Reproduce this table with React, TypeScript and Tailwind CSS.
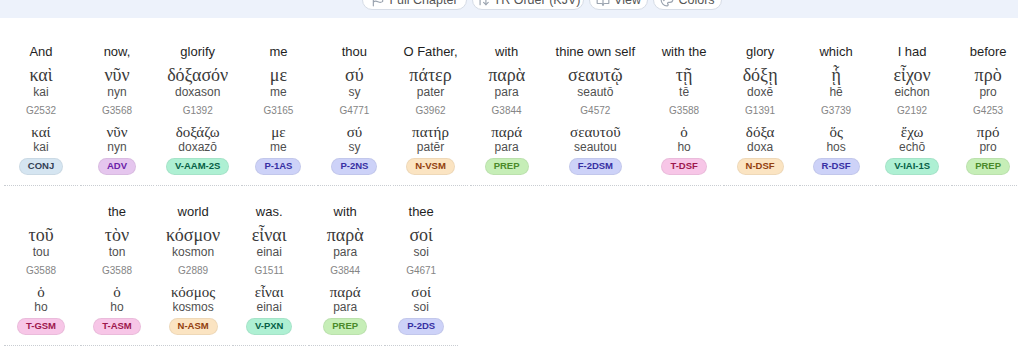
import React from "react";
import { Flag, ArrowUpDown, BookOpen, Palette } from "lucide-react";

type Word = {
  en: string;
  gr: string;
  tr: string;
  strong: string;
  lemma: string;
  lemmaTr: string;
  morph: string;
};

// verse lines as they wrap in the interlinear view
const lines: Word[][] = [
  [
    { en: "And", gr: "καὶ", tr: "kai", strong: "G2532", lemma: "καί", lemmaTr: "kai", morph: "CONJ" },
    { en: "now,", gr: "νῦν", tr: "nyn", strong: "G3568", lemma: "νῦν", lemmaTr: "nyn", morph: "ADV" },
    { en: "glorify", gr: "δόξασόν", tr: "doxason", strong: "G1392", lemma: "δοξάζω", lemmaTr: "doxazō", morph: "V-AAM-2S" },
    { en: "me", gr: "με", tr: "me", strong: "G3165", lemma: "με", lemmaTr: "me", morph: "P-1AS" },
    { en: "thou", gr: "σύ", tr: "sy", strong: "G4771", lemma: "σύ", lemmaTr: "sy", morph: "P-2NS" },
    { en: "O Father,", gr: "πάτερ", tr: "pater", strong: "G3962", lemma: "πατήρ", lemmaTr: "patēr", morph: "N-VSM" },
    { en: "with", gr: "παρὰ", tr: "para", strong: "G3844", lemma: "παρά", lemmaTr: "para", morph: "PREP" },
    { en: "thine own self", gr: "σεαυτῷ", tr: "seautō", strong: "G4572", lemma: "σεαυτοῦ", lemmaTr: "seautou", morph: "F-2DSM" },
    { en: "with the", gr: "τῇ", tr: "tē", strong: "G3588", lemma: "ὁ", lemmaTr: "ho", morph: "T-DSF" },
    { en: "glory", gr: "δόξῃ", tr: "doxē", strong: "G1391", lemma: "δόξα", lemmaTr: "doxa", morph: "N-DSF" },
    { en: "which", gr: "ᾗ", tr: "hē", strong: "G3739", lemma: "ὅς", lemmaTr: "hos", morph: "R-DSF" },
    { en: "I had", gr: "εἶχον", tr: "eichon", strong: "G2192", lemma: "ἔχω", lemmaTr: "echō", morph: "V-IAI-1S" },
    { en: "before", gr: "πρὸ", tr: "pro", strong: "G4253", lemma: "πρό", lemmaTr: "pro", morph: "PREP" },
  ],
  [
    { en: "", gr: "τοῦ", tr: "tou", strong: "G3588", lemma: "ὁ", lemmaTr: "ho", morph: "T-GSM" },
    { en: "the", gr: "τὸν", tr: "ton", strong: "G3588", lemma: "ὁ", lemmaTr: "ho", morph: "T-ASM" },
    { en: "world", gr: "κόσμον", tr: "kosmon", strong: "G2889", lemma: "κόσμος", lemmaTr: "kosmos", morph: "N-ASM" },
    { en: "was.", gr: "εἶναι", tr: "einai", strong: "G1511", lemma: "εἶναι", lemmaTr: "einai", morph: "V-PXN" },
    { en: "with", gr: "παρὰ", tr: "para", strong: "G3844", lemma: "παρά", lemmaTr: "para", morph: "PREP" },
    { en: "thee", gr: "σοί", tr: "soi", strong: "G4671", lemma: "σοί", lemmaTr: "soi", morph: "P-2DS" },
  ],
];

const morphClass = (morph: string) => {
  if (morph === "CONJ") return "bg-[#d5e5f1] text-[#334155]";
  if (morph === "ADV") return "bg-[#e5c6ee] text-[#6b21a8]";
  if (morph === "PREP") return "bg-[#c6eeb7] text-[#4a8a2a]";
  if (morph.startsWith("V-")) return "bg-[#aef0d3] text-[#065f46]";
  if (morph.startsWith("N-")) return "bg-[#fbe4c2] text-[#92400e]";
  if (morph.startsWith("T-")) return "bg-[#f7c6e7] text-[#9d174d]";
  // P-, F-, R- pronouns
  return "bg-[#cdd2f8] text-[#3730a3]";
};

const greek = { fontFamily: '"Liberation Serif", "Times New Roman", serif' };

const WordCell = ({ w }: { w: Word }) => (
  <div className="shrink-0 min-w-[74px] px-2.5 pt-2.5 pb-2.5 flex flex-col items-center text-center border-b border-dotted border-[#c9cdd2] whitespace-nowrap">
    <div className="text-[13px] leading-4 text-[#1f1f1f]">{w.en || "\u00a0"}</div>
    <div className="text-[18px] leading-[21px] mt-[5.4px] text-[#3a3a3a]" style={greek}>
      {w.gr}
    </div>
    <div className="text-[12px] leading-3 text-[#4f4f4f]">{w.tr}</div>
    <div className="text-[10px] leading-4 mt-[5px] text-[#858585]">{w.strong}</div>
    <div className="text-[15px] leading-[18px] mt-[3.5px] text-[#333]" style={greek}>
      {w.lemma}
    </div>
    <div className="text-[12px] leading-3 text-[#4f4f4f]">{w.lemmaTr}</div>
    <span
      className={`mt-[5px] h-[17px] px-2 inline-flex items-center rounded-full border border-black/5 text-[9.5px] font-bold ${morphClass(
        w.morph
      )}`}
    >
      {w.morph}
    </span>
  </div>
);

const toolbar = [
  { label: "Full Chapter", Icon: Flag, width: "w-[105px]" },
  { label: "TR Order (KJV)", Icon: ArrowUpDown, width: "w-[112px]" },
  { label: "View", Icon: BookOpen, width: "w-[59px]" },
  { label: "Colors", Icon: Palette, width: "w-[69px]" },
];

export default function App() {
  return (
    <div
      className="w-[1018px] h-[350px] overflow-hidden bg-white"
      style={{ fontFamily: '"Liberation Sans", Arial, sans-serif' }}
    >
      {/* top toolbar, scrolled partly out of view */}
      <div className="h-[18px] bg-[#edf2fb] overflow-hidden flex items-end pb-2 pl-[362px] gap-[5px]">
        {toolbar.map(({ label, Icon, width }) => (
          <button
            key={label}
            className={`shrink-0 ${width} flex items-center justify-center gap-1 pt-2 pb-[1.5px] leading-4 bg-white border border-[#d6dce6] rounded-[10px] text-[12.5px] text-[#555]`}
          >
            <Icon className="w-3.5 h-3.5 text-[#9aa3af]" />
            {label}
          </button>
        ))}
      </div>

      {/* interlinear rows */}
      <div className="pt-4 pb-1 pl-1 flex flex-col gap-y-2 border-b border-[#dfe5ec]">
        {lines.map((line, i) => (
          <div key={i} className="flex gap-x-0.5">
            {line.map((w, j) => (
              <WordCell key={j} w={w} />
            ))}
          </div>
        ))}
      </div>
    </div>
  );
}
